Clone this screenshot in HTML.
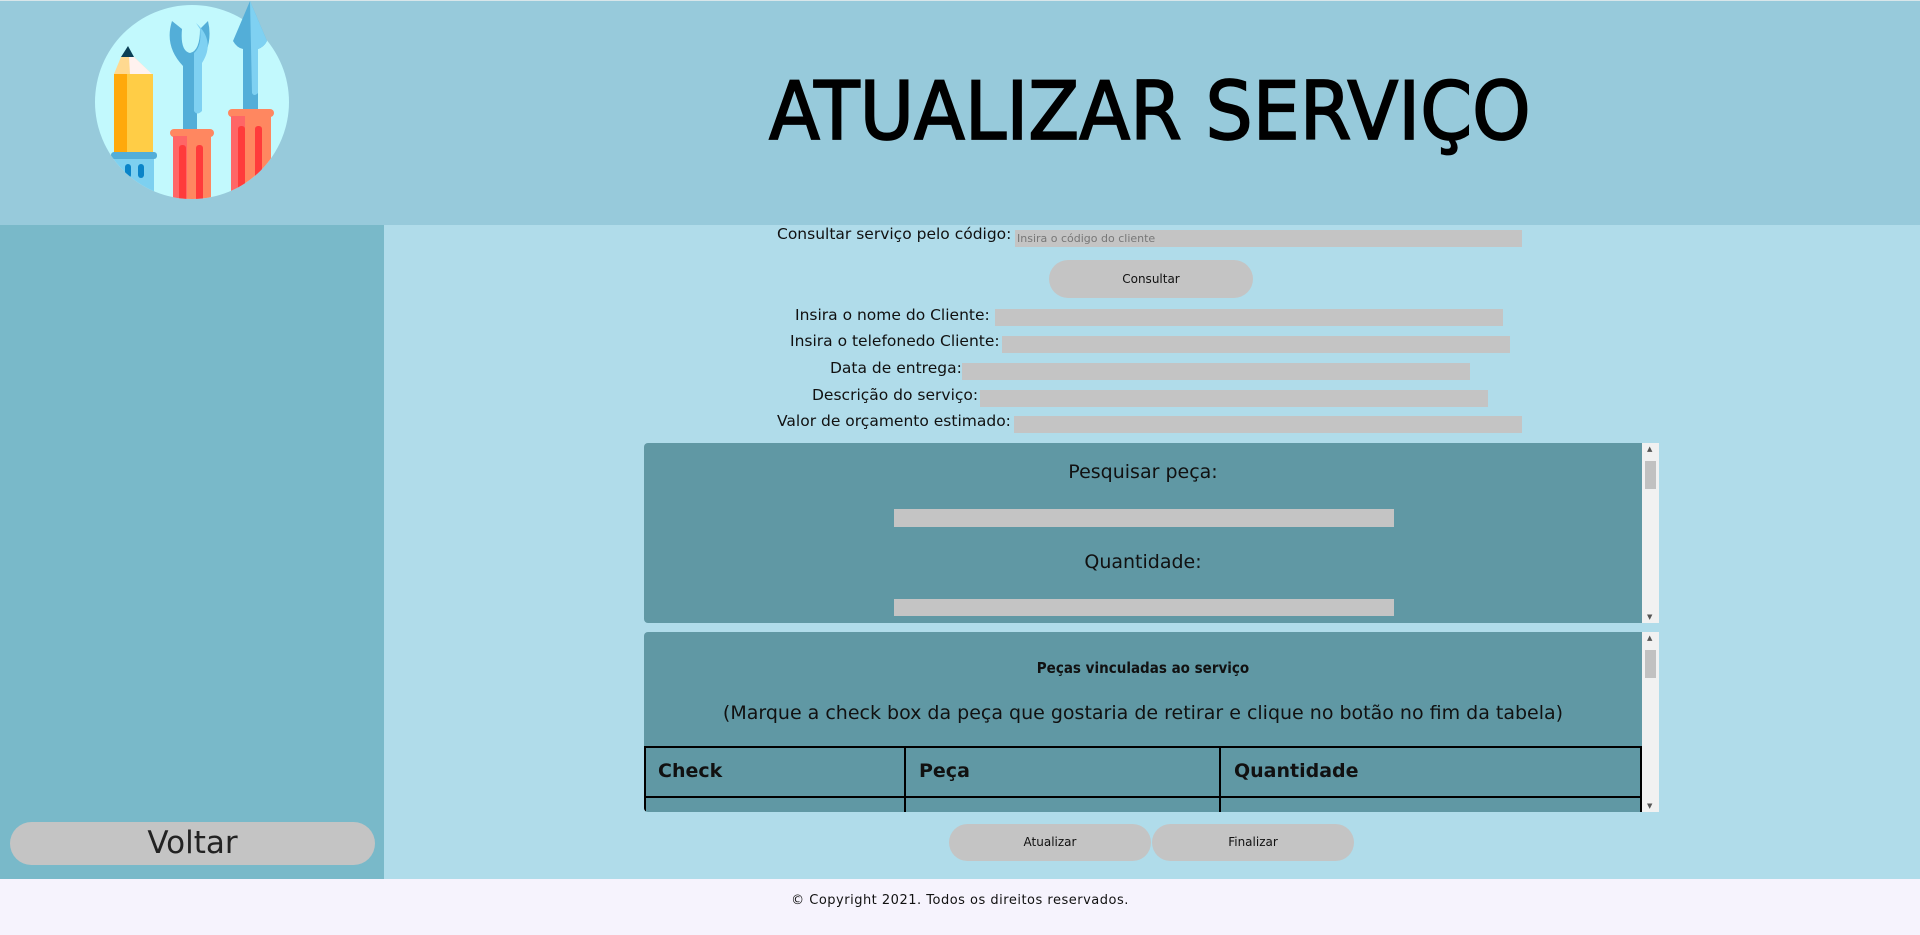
<!DOCTYPE html>
<html><head><meta charset="utf-8"><style>
*{margin:0;padding:0;box-sizing:border-box}
body{width:1920px;height:935px;overflow:hidden;font-family:"DejaVu Sans","Liberation Sans",sans-serif;background:#b0dcea;position:relative;color:#111}
.abs{position:absolute}
#hdr{left:0;top:0;width:1920px;height:225px;background:#97cadb;border-top:1px solid #d8e6ea}
#side{left:0;top:225px;width:384px;height:654px;background:#79b9c9}
#foot{left:0;top:879px;width:1920px;height:56px;background:#f6f3fd;text-align:center;font-size:13px;line-height:44px;letter-spacing:.5px}
.lbl{font-size:15.5px;white-space:nowrap}
.inp{background:#c4c4c4;height:17px}
.btn{background:#c4c4c4;border-radius:20px;text-align:center;font-size:12px}
.panel{background:#6098a4;left:644px;width:1015px;overflow:hidden;border-radius:4px 0 0 4px}
.sb{position:absolute;right:0;top:0;width:17px;height:100%;background:#f1f1f1}
.sb i{position:absolute;left:3px;width:11px;height:28px;background:#c1c1c1;top:18px}
.sb b{position:absolute;left:5px;font-size:7px;color:#555;font-weight:normal}
</style></head><body>
<div id="hdr" class="abs">
<svg class="abs" style="left:90px;top:0" width="210" height="205" viewBox="0 0 210 205">
<circle cx="102" cy="101" r="97" fill="#c2f9fd"/>
<clipPath id="c"><circle cx="102" cy="101" r="97"/><rect x="150" y="0" width="60" height="100"/></clipPath>
<g clip-path="url(#c)">
<polygon points="38,45 44,56 31,56" fill="#0b3f55"/>
<polygon points="31,56 44,56 62,73 24,73" fill="#ffd990"/>
<polygon points="39,56 44,56 62,73 40,73" fill="#fff2ef"/>
<rect x="24" y="73" width="13" height="78" fill="#ffa90b"/>
<rect x="37" y="73" width="26" height="78" fill="#ffcd46"/>
<rect x="21" y="151" width="46" height="7" rx="3" fill="#53aed8"/>
<rect x="24" y="158" width="40" height="40" fill="#7dd0f0"/>
<rect x="35" y="163" width="6" height="14" rx="3" fill="#0a84c8"/>
<rect x="48" y="163" width="6" height="14" rx="3" fill="#0a84c8"/>
<path d="M82 20 Q74 45 93 65 L93 130 L107 130 L107 65 Q124 45 118 20 L110 28 Q110 50 100 52 Q90 50 92 28 Z" fill="#53aed8"/>
<path d="M106 22 Q126 40 112 62 L112 110 Q107 115 104 110 L104 52 Q112 45 110 28 Z" fill="#7fd1f2"/>
<rect x="80" y="128" width="44" height="8" rx="4" fill="#ff8760"/>
<rect x="83" y="135" width="38" height="70" fill="#ff8760"/>
<rect x="83" y="135" width="14" height="70" fill="#ff6666"/>
<rect x="89" y="144" width="7" height="60" rx="3" fill="#ff3b3b"/>
<rect x="106" y="144" width="7" height="60" rx="3" fill="#ff3b3b"/>
<path d="M160 0 L143 40 Q147 47 153 48 L153 110 L168 110 L168 48 Q174 46 177 40 Z" fill="#53aed8"/>
<path d="M160 0 L177 40 Q174 46 168 48 L168 92 Q164 96 162 92 Z" fill="#7fd1f2"/>
<rect x="138" y="108" width="46" height="8" rx="4" fill="#ff8760"/>
<rect x="141" y="115" width="40" height="90" fill="#ff8760"/>
<rect x="141" y="115" width="14" height="90" fill="#ff6666"/>
<rect x="148" y="125" width="7" height="70" rx="3" fill="#ff3b3b"/>
<rect x="165" y="125" width="7" height="70" rx="3" fill="#ff3b3b"/>
</g></svg>
<div class="abs" style="left:769px;top:66px;font-size:80px;line-height:90px;white-space:nowrap;-webkit-text-stroke:1.8px #000;transform:scaleX(.93);transform-origin:left;color:#000">ATUALIZAR SERVIÇO</div>
</div>
<div id="side" class="abs"><div class="abs btn" style="left:10px;top:597px;width:365px;height:43px;font-size:31px;line-height:43px;border-radius:22px;color:#222">Voltar</div></div>

<div class="abs lbl" style="left:777px;top:225px">Consultar serviço pelo código:</div>
<div class="abs inp" style="left:1015px;top:230px;width:507px;font-size:11px;color:#777;line-height:17px;padding-left:2px">Insira o código do cliente</div>
<div class="abs btn" style="left:1049px;top:260px;width:204px;height:38px;line-height:38px">Consultar</div>

<div class="abs lbl" style="left:795px;top:306px">Insira o nome do Cliente:</div>
<div class="abs inp" style="left:995px;top:309px;width:508px"></div>
<div class="abs lbl" style="left:790px;top:332px">Insira o telefonedo Cliente:</div>
<div class="abs inp" style="left:1002px;top:336px;width:508px"></div>
<div class="abs lbl" style="left:830px;top:359px">Data de entrega:</div>
<div class="abs inp" style="left:962px;top:363px;width:508px"></div>
<div class="abs lbl" style="left:812px;top:386px">Descrição do serviço:</div>
<div class="abs inp" style="left:980px;top:390px;width:508px"></div>
<div class="abs lbl" style="left:777px;top:412px">Valor de orçamento estimado:</div>
<div class="abs inp" style="left:1014px;top:416px;width:508px"></div>

<div class="abs panel" style="top:443px;height:180px">
<div class="abs" style="left:0;width:998px;top:18px;text-align:center;font-size:19px">Pesquisar peça:</div>
<div class="abs inp" style="left:250px;top:66px;width:500px;height:18px"></div>
<div class="abs" style="left:0;width:998px;top:108px;text-align:center;font-size:19px">Quantidade:</div>
<div class="abs inp" style="left:250px;top:156px;width:500px;height:17px"></div>
<div class="sb"><b style="top:2px">▲</b><i></i><b style="bottom:2px">▼</b></div>
</div>

<div class="abs panel" style="top:632px;height:180px">
<div class="abs" style="left:0;width:998px;top:27px;text-align:center;font-size:15px;font-weight:bold;transform:scaleX(.9)">Peças vinculadas ao serviço</div>
<div class="abs" style="left:0;width:998px;top:70px;text-align:center;font-size:19px;white-space:nowrap">(Marque a check box da peça que gostaria de retirar e clique no botão no fim da tabela)</div>
<div class="abs" style="left:0;top:114px;width:998px;height:70px;border:2px solid #000;border-bottom:none"></div>
<div class="abs" style="left:0;top:164px;width:998px;height:2px;background:#000"></div>
<div class="abs" style="left:260px;top:114px;width:2px;height:70px;background:#000"></div>
<div class="abs" style="left:575px;top:114px;width:2px;height:70px;background:#000"></div>
<div class="abs" style="left:14px;top:128px;font-size:19px;font-weight:bold">Check</div>
<div class="abs" style="left:275px;top:128px;font-size:19px;font-weight:bold">Peça</div>
<div class="abs" style="left:590px;top:128px;font-size:19px;font-weight:bold">Quantidade</div>
<div class="sb"><b style="top:2px">▲</b><i></i><b style="bottom:2px">▼</b></div>
</div>

<div class="abs btn" style="left:949px;top:824px;width:202px;height:37px;line-height:37px">Atualizar</div>
<div class="abs btn" style="left:1152px;top:824px;width:202px;height:37px;line-height:37px">Finalizar</div>

<div id="foot" class="abs">© Copyright 2021. Todos os direitos reservados.</div>
</body></html>
